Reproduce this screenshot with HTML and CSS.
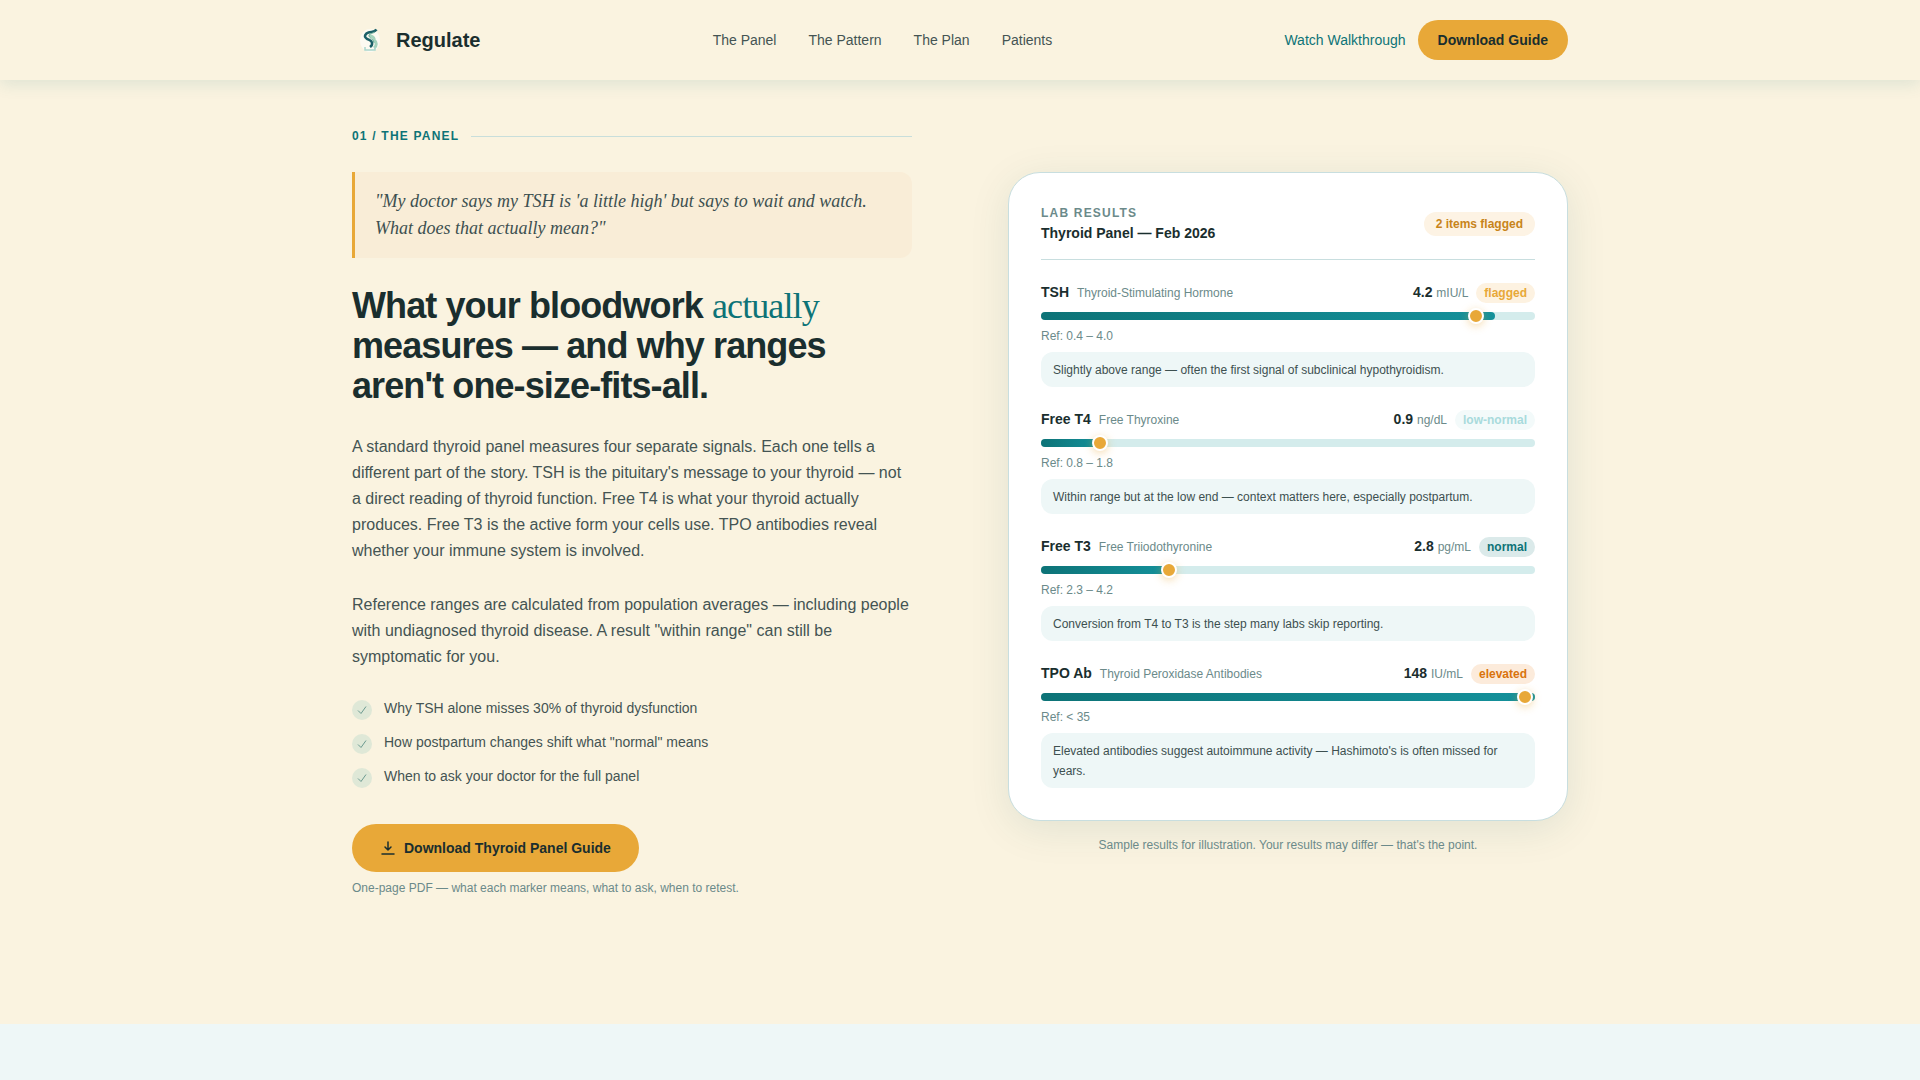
FILE: index.html
```html
<!DOCTYPE html>
<html lang="en">
<head>
    <meta charset="UTF-8">
    <meta name="viewport" content="width=device-width, initial-scale=1.0">
    <title>Regulate</title>
    <link rel="stylesheet" href="styles.css">
</head>
<body>
    <header class="site-header">
        <div class="container header-inner">
            <a href="#" class="brand">
                <svg class="brand-logo" viewBox="0 0 36 36" aria-hidden="true">
                    <ellipse cx="18" cy="18.5" rx="10" ry="11.5" fill="#fcfaf2"/>
                    <path d="M17 13c2 1 6 2 5 5 3 2 3 6 0 8" fill="none" stroke="#a5d3bd" stroke-width="3"/>
                    <path d="M13 25v3h10v-3" fill="none" stroke="#a9d6cd" stroke-width="1.5"/>
                    <path d="M24.5 7.500c-2 3-5 2-8 3-3 1-5 4-2 6 2 1.500 4.500 1.500 5.500 4 .5 2-.5 3.500-2 4.500" fill="none" stroke="#1b6068" stroke-width="2.500"/>
                    <path d="M23 10c-3 2-6 1-6 4 0 2 5 3 5 7" fill="none" stroke="#6fae9d" stroke-width="1"/>
                </svg>
                <span class="brand-name">Regulate</span>
            </a>
            <nav class="main-nav">
                <a href="#panel">The Panel</a>
                <a href="#pattern">The Pattern</a>
                <a href="#plan">The Plan</a>
                <a href="#patients">Patients</a>
            </nav>
            <div class="header-actions">
                <a href="#walkthrough" class="link-walkthrough">Watch Walkthrough</a>
                <button type="button" class="btn btn-small">Download Guide</button>
            </div>
        </div>
    </header>

    <main>
        <section class="panel-section" id="panel">
            <div class="container panel-grid">
                <div class="panel-copy">
                    <div class="eyebrow">01 / THE PANEL</div>
                    <blockquote class="quote">"My doctor says my TSH is 'a little high' but says to wait and watch. What does that actually mean?"</blockquote>
                    <h2 class="headline">What your bloodwork <span class="accent">actually</span> measures — and why ranges aren't one-size-fits-all.</h2>
                    <p class="body-text">A standard thyroid panel measures four separate signals. Each one tells a different part of the story. TSH is the pituitary's message to your thyroid — not a direct reading of thyroid function. Free T4 is what your thyroid actually produces. Free T3 is the active form your cells use. TPO antibodies reveal whether your immune system is involved.</p>
                    <p class="body-text">Reference ranges are calculated from population averages — including people with undiagnosed thyroid disease. A result "within range" can still be symptomatic for you.</p>
                    <ul class="checklist">
                        <li>
                            <svg class="check" viewBox="0 0 20 20" aria-hidden="true"><circle cx="10" cy="10" r="10"/><path d="M6 10.500l3 3 5-7"/></svg>
                            <span>Why TSH alone misses 30% of thyroid dysfunction</span>
                        </li>
                        <li>
                            <svg class="check" viewBox="0 0 20 20" aria-hidden="true"><circle cx="10" cy="10" r="10"/><path d="M6 10.500l3 3 5-7"/></svg>
                            <span>How postpartum changes shift what "normal" means</span>
                        </li>
                        <li>
                            <svg class="check" viewBox="0 0 20 20" aria-hidden="true"><circle cx="10" cy="10" r="10"/><path d="M6 10.500l3 3 5-7"/></svg>
                            <span>When to ask your doctor for the full panel</span>
                        </li>
                    </ul>
                    <button type="button" class="btn btn-large">
                        <svg class="btn-icon" viewBox="0 0 16 16" aria-hidden="true"><path d="M8 2v8M5 7l3 3 3-3M2 14h12"/></svg>
                        Download Thyroid Panel Guide
                    </button>
                    <p class="small-note">One-page PDF — what each marker means, what to ask, when to retest.</p>
                </div>

                <div class="panel-results">
                    <div class="lab-card">
                        <div class="lab-header">
                            <div>
                                <div class="lab-label">LAB RESULTS</div>
                                <h3 class="lab-title">Thyroid Panel — Feb 2026</h3>
                            </div>
                            <span class="lab-flag">2 items flagged</span>
                        </div>

                        <div class="marker">
                            <div class="marker-row">
                                <span class="marker-code">TSH</span>
                                <span class="marker-name">Thyroid-Stimulating Hormone</span>
                                <span class="marker-value">4.2 <small>mIU/L</small></span>
                                <span class="status flagged">flagged</span>
                            </div>
                            <div class="bar">
                                <div class="bar-fill" style="width: 92%"></div>
                                <div class="bar-dot" style="left: 88%"></div>
                            </div>
                            <div class="marker-ref">Ref: 0.4 – 4.0</div>
                            <p class="marker-note">Slightly above range — often the first signal of subclinical hypothyroidism.</p>
                        </div>

                        <div class="marker">
                            <div class="marker-row">
                                <span class="marker-code">Free T4</span>
                                <span class="marker-name">Free Thyroxine</span>
                                <span class="marker-value">0.9 <small>ng/dL</small></span>
                                <span class="status low">low-normal</span>
                            </div>
                            <div class="bar">
                                <div class="bar-fill" style="width: 12%"></div>
                                <div class="bar-dot" style="left: 12%"></div>
                            </div>
                            <div class="marker-ref">Ref: 0.8 – 1.8</div>
                            <p class="marker-note">Within range but at the low end — context matters here, especially postpartum.</p>
                        </div>

                        <div class="marker">
                            <div class="marker-row">
                                <span class="marker-code">Free T3</span>
                                <span class="marker-name">Free Triiodothyronine</span>
                                <span class="marker-value">2.8 <small>pg/mL</small></span>
                                <span class="status normal">normal</span>
                            </div>
                            <div class="bar">
                                <div class="bar-fill" style="width: 26%"></div>
                                <div class="bar-dot" style="left: 26%"></div>
                            </div>
                            <div class="marker-ref">Ref: 2.3 – 4.2</div>
                            <p class="marker-note">Conversion from T4 to T3 is the step many labs skip reporting.</p>
                        </div>

                        <div class="marker">
                            <div class="marker-row">
                                <span class="marker-code">TPO Ab</span>
                                <span class="marker-name">Thyroid Peroxidase Antibodies</span>
                                <span class="marker-value">148 <small>IU/mL</small></span>
                                <span class="status elevated">elevated</span>
                            </div>
                            <div class="bar">
                                <div class="bar-fill" style="width: 100%"></div>
                                <div class="bar-dot" style="left: 98%"></div>
                            </div>
                            <div class="marker-ref">Ref: &lt; 35</div>
                            <p class="marker-note">Elevated antibodies suggest autoimmune activity — Hashimoto's is often missed for years.</p>
                        </div>
                    </div>
                    <p class="sample-note">Sample results for illustration. Your results may differ — that's the point.</p>
                </div>
            </div>
        </section>
    </main>
</body>
</html>
```

FILE: styles.css
```css
* {
    box-sizing: border-box;
    margin: 0;
    padding: 0;
}
body {
    font-family: "Liberation Sans", Arial, sans-serif;
    font-size: 14px;
    color: #1a2e2e;
    background-color: #eef7f7;
}
a {
    text-decoration: none;
}
.container {
    max-width: 1280px;
    margin: 0 auto;
    padding: 0 32px;
}

/* header */
.site-header {
    position: sticky;
    top: 0;
    z-index: 10;
    background-color: #faf3e0;
    box-shadow: 0 4px 16px rgba(13, 115, 119, 0.12);
}
.header-inner {
    display: flex;
    align-items: center;
    justify-content: space-between;
    height: 80px;
}
.brand {
    display: flex;
    align-items: center;
    gap: 8px;
    color: #1a2e2e;
}
.brand-logo {
    width: 36px;
    height: 36px;
}
.brand-name {
    font-size: 20px;
    font-weight: bold;
}
.main-nav {
    display: flex;
    gap: 32px;
}
.main-nav a {
    color: #445453;
}
.header-actions {
    display: flex;
    align-items: center;
    gap: 12px;
}
.link-walkthrough {
    color: #0d7377;
}
.btn {
    display: inline-flex;
    align-items: center;
    gap: 8px;
    border: none;
    border-radius: 24px;
    background-color: #e8a838;
    color: #1a2e2e;
    font-family: inherit;
    font-size: 14px;
    font-weight: bold;
    cursor: pointer;
}
.btn-small {
    height: 40px;
    padding: 0 20px;
}
.btn-large {
    height: 48px;
    padding: 0 28px;
    margin-top: 36px;
}
.btn-icon {
    width: 16px;
    height: 16px;
    fill: none;
    stroke: currentColor;
    stroke-width: 1.5;
    stroke-linecap: round;
    stroke-linejoin: round;
}

/* 01 / the panel */
.panel-section {
    background-color: #faf3e0;
    padding: 48px 0 128px;
}
.panel-grid {
    display: grid;
    grid-template-columns: 1fr 1fr;
    gap: 96px;
    align-items: center;
}
.eyebrow {
    display: flex;
    align-items: center;
    gap: 12px;
    color: #0d7377;
    font-size: 12px;
    font-weight: bold;
    line-height: 16px;
    letter-spacing: 0.1em;
}
.eyebrow::after {
    content: "";
    flex: 1;
    height: 1px;
    background-color: #c8dedb;
}
.quote {
    margin-top: 28px;
    padding: 16px 20px;
    border-left: 3px solid #e8a838;
    border-radius: 0 12px 12px 0;
    background-color: #f9edd7;
    color: #3d5050;
    font-family: "Liberation Serif", "Times New Roman", serif;
    font-size: 18px;
    font-style: italic;
    line-height: 27px;
}
.headline {
    margin-top: 28px;
    font-size: 36px;
    line-height: 40px;
    letter-spacing: -0.025em;
}
.accent {
    color: #0d7377;
    font-family: "Liberation Serif", "Times New Roman", serif;
    font-weight: normal;
}
.body-text {
    margin-top: 28px;
    color: #445453;
    font-size: 16px;
    line-height: 26px;
}
.checklist {
    display: grid;
    gap: 12px;
    margin-top: 28px;
    list-style: none;
}
.checklist li {
    display: flex;
    gap: 12px;
    color: #445453;
    line-height: 20px;
}
.check {
    width: 20px;
    height: 20px;
    margin-top: 2px;
}
.check circle {
    fill: #dfe8d7;
}
.check path {
    fill: none;
    stroke: #6b9a90;
    stroke-width: 1;
}
.small-note {
    margin-top: 8px;
    color: #6b8a8a;
    font-size: 12px;
    line-height: 16px;
}

/* lab card */
.lab-card {
    padding: 32px;
    border: 1px solid #c8dedf;
    border-radius: 32px;
    background-color: #fff;
    box-shadow: 0 8px 40px rgba(13, 80, 80, 0.1);
}
.lab-header {
    display: flex;
    align-items: center;
    justify-content: space-between;
    padding-bottom: 16px;
    border-bottom: 1px solid #c8dedf;
}
.lab-label {
    color: #6b8a8a;
    font-size: 12px;
    font-weight: bold;
    line-height: 16px;
    letter-spacing: 0.1em;
}
.lab-title {
    margin-top: 2px;
    font-size: 14px;
    line-height: 20px;
}
.lab-flag {
    padding: 0 12px;
    border-radius: 12px;
    background-color: #fdf3e4;
    color: #c8841a;
    font-size: 12px;
    font-weight: bold;
    line-height: 24px;
}
.marker {
    margin-top: 20px;
}
.marker-row {
    display: flex;
    align-items: baseline;
    gap: 8px;
    height: 24px;
    line-height: 24px;
}
.marker-code {
    font-weight: bold;
}
.marker-name {
    flex: 1;
    color: #6b8a8a;
    font-size: 12px;
}
.marker-value {
    font-weight: bold;
}
.marker-value small {
    color: #6b8a8a;
    font-size: 12px;
    font-weight: normal;
}
.status {
    padding: 0 8px;
    border-radius: 10px;
    font-size: 12px;
    font-weight: bold;
    line-height: 20px;
}
.flagged {
    background-color: #fdf2e1;
    color: #e8a838;
}
.low {
    background-color: #f3fafa;
    color: #a8dadc;
}
.normal {
    background-color: #dbeaea;
    color: #0d7377;
}
.elevated {
    background-color: #fcebdb;
    color: #d9730d;
}
.bar {
    position: relative;
    height: 8px;
    margin: 8px 0;
    border-radius: 4px;
    background-color: #d4ecec;
}
.bar-fill {
    height: 8px;
    border-radius: 4px;
    background: linear-gradient(90deg, #0d7377, #14919b);
}
.bar-dot {
    position: absolute;
    top: 50%;
    width: 16px;
    height: 16px;
    border: 2px solid #fff;
    border-radius: 50%;
    background-color: #e8a838;
    box-shadow: 0 2px 8px rgba(232, 168, 56, 0.4);
    transform: translate(-50%, -50%);
}
.marker-ref {
    color: #6b8a8a;
    font-size: 12px;
    line-height: 16px;
}
.marker-note {
    margin-top: 8px;
    padding: 8px 12px 7px;
    border-radius: 12px;
    background-color: #eef7f7;
    color: #3d5050;
    font-size: 12px;
    line-height: 20px;
}
.sample-note {
    margin-top: 16px;
    color: #6b8a8a;
    font-size: 12px;
    line-height: 16px;
    text-align: center;
}
```
